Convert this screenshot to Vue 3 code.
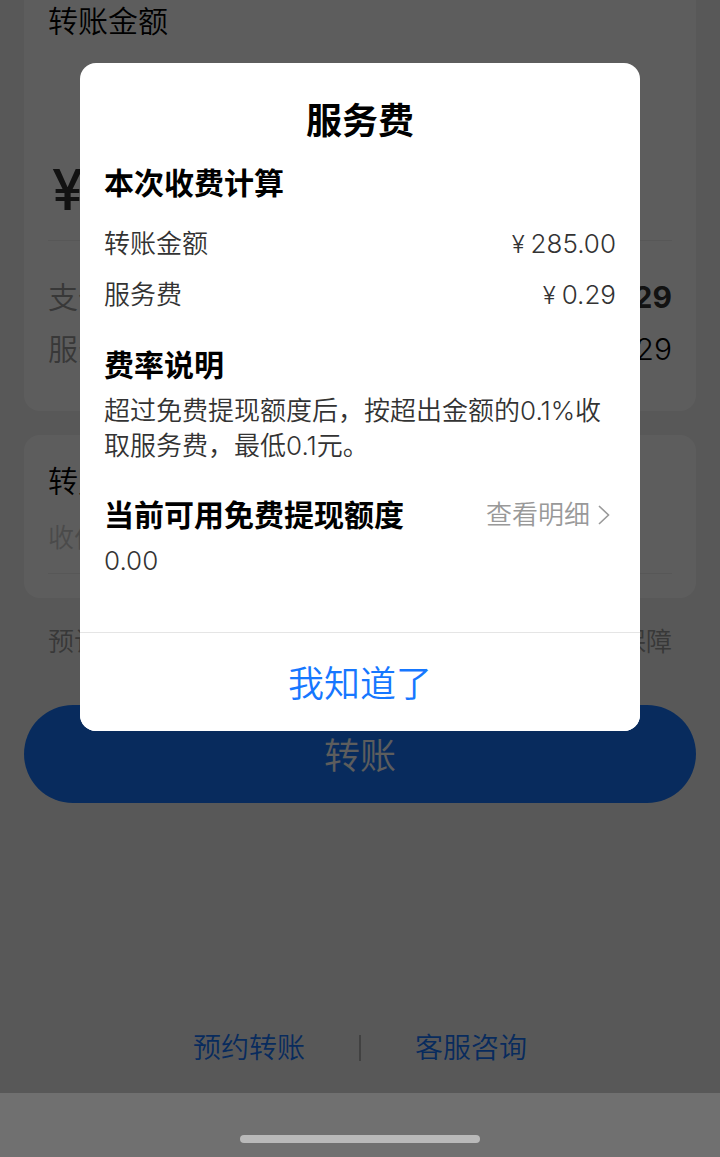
<template>
  <div class="screen">
    <div class="page">
      <main class="transfer">
        <section class="card amount-card">
          <h2 class="card-title">转账金额</h2>
          <div class="amount">¥285.00</div>
          <div class="row">
            <span class="row-label">支付总额</span>
            <strong>285.29</strong>
          </div>
          <div class="row">
            <span class="row-label">服务费</span>
            <span>0.29</span>
          </div>
        </section>

        <section class="card note-card">
          <label class="card-title" for="note">转账说明</label>
          <input id="note" v-model="note" class="note" type="text" placeholder="收付款双方可见" />
        </section>

        <div class="tips">
          <span>预计实时到账</span>
          <span>资金安全保障</span>
        </div>

        <button class="submit" type="button">转账</button>
      </main>

      <nav class="links">
        <a href="#">预约转账</a>
        <span class="separator"></span>
        <a href="#">客服咨询</a>
      </nav>

      <div v-if="visible" class="overlay">
        <div class="dialog" role="dialog" aria-modal="true" aria-labelledby="dialog-title">
          <div class="dialog-body">
            <h1 id="dialog-title" class="dialog-title">服务费</h1>

            <h3>本次收费计算</h3>
            <dl class="fees">
              <div v-for="fee in fees" :key="fee.label" class="fee">
                <dt>{{ fee.label }}</dt>
                <dd><span class="yen">¥</span>{{ fee.value }}</dd>
              </div>
            </dl>

            <h3>费率说明</h3>
            <p class="rule">超过免费提现额度后，按超出金额的0.1%收取服务费，最低0.1元。</p>

            <div class="quota-head">
              <h3>当前可用免费提现额度</h3>
              <a class="detail" href="#">
                查看明细
                <svg width="12" height="22" viewBox="0 0 12 22" aria-hidden="true">
                  <path d="M1 2L10.500 11L1 20" fill="none" stroke="currentColor" stroke-width="1.6" />
                </svg>
              </a>
            </div>
            <p class="quota">0.00</p>
          </div>
          <button class="confirm" type="button" @click="visible = false">我知道了</button>
        </div>
      </div>
    </div>

    <div class="system-bar">
      <div class="handle"></div>
    </div>
  </div>
</template>

<script setup>
import { ref } from 'vue'

const visible = ref(true)
const note = ref('')

const fees = [
  { label: '转账金额', value: '285.00' },
  { label: '服务费', value: '0.29' }
]
</script>

<style>
body {
  margin: 0;
}
</style>

<style scoped>
.screen {
  display: flex;
  flex-direction: column;
  min-height: 100vh;
  font-family: Inter, 'Noto Sans CJK SC', sans-serif;
  font-size: 26px;
  font-weight: 350;
  color: #333;
}

.screen * {
  box-sizing: border-box;
}

h1,
h2,
h3,
p,
dl,
dd {
  margin: 0;
}

button {
  border: none;
  font-family: inherit;
  font-weight: inherit;
  cursor: pointer;
}

a {
  text-decoration: none;
}

.page {
  position: relative;
  display: flex;
  flex: 1;
  flex-direction: column;
  justify-content: space-between;
  background: #f2f2f2;
}

.transfer {
  padding: 0 24px;
}

.card {
  padding: 0 24px;
  border-radius: 16px;
  background: #fff;
}

.amount-card {
  padding-bottom: 36px;
  border-radius: 0 0 16px 16px;
}

.card-title {
  display: block;
  font-size: 30px;
  font-weight: inherit;
  line-height: 42px;
  color: #000;
}

.amount {
  margin: 108px 0 30px;
  padding: 0 4px 10px;
  border-bottom: 1px solid #eee;
  font-size: 56px;
  font-weight: 500;
  line-height: 80px;
}

.row {
  display: flex;
  justify-content: space-between;
  font-size: 30px;
  line-height: 52px;
  color: #000;
}

.row strong {
  color: #333;
}

.row-label {
  color: #999;
}

.note-card {
  margin-top: 24px;
  padding-top: 25px;
  padding-bottom: 24px;
}

.note {
  width: 100%;
  height: 72px;
  padding: 0;
  border: none;
  border-bottom: 1px solid #eee;
  background: none;
  font-family: inherit;
  font-size: 26px;
  font-weight: inherit;
}

.note::placeholder {
  color: #ccc;
  opacity: 1;
}

.tips {
  display: flex;
  justify-content: space-between;
  padding: 26px 24px 21px;
  line-height: 36px;
  color: #999;
}

.submit {
  width: 100%;
  height: 98px;
  margin-top: 24px;
  padding: 0 0 3px;
  border-radius: 49px;
  background: #1677ff;
  font-size: 36px;
  color: #fff;
}

.links {
  display: flex;
  align-items: center;
  justify-content: center;
  gap: 54px;
  padding-bottom: 25px;
  font-size: 28px;
  line-height: 40px;
}

.links a {
  color: #1677ff;
}

.separator {
  width: 2px;
  height: 26px;
  background: #b2b2b2;
}

.overlay {
  position: absolute;
  inset: 0;
  padding: 63px 80px 0;
  background: rgba(0, 0, 0, 0.635);
}

.dialog {
  overflow: hidden;
  border-radius: 16px;
  background: #fff;
}

.dialog-body {
  padding: 33px 24px 53px;
}

.dialog-title {
  font-size: 36px;
  line-height: 50px;
  text-align: center;
  color: #000;
}

h3 {
  font-size: 30px;
  line-height: 42px;
  color: #000;
}

.dialog-title + h3 {
  margin-top: 16px;
}

.fees {
  margin: 15px 0 23px;
}

.fee {
  display: flex;
  justify-content: space-between;
  line-height: 50px;
}

.yen {
  margin-right: 6px;
  font-size: 24px;
}

.rule {
  margin: 7px 0 31px;
  line-height: 35px;
}

.quota-head {
  display: flex;
  align-items: center;
  justify-content: space-between;
}

.detail {
  display: flex;
  align-items: center;
  gap: 8px;
  padding-right: 6px;
  line-height: 36px;
  color: #999;
}

.quota {
  margin-top: 7px;
  line-height: 36px;
}

.confirm {
  display: block;
  width: 100%;
  height: 99px;
  padding: 0 0 3px;
  border-top: 1px solid #e5e5e5;
  background: #fff;
  font-size: 36px;
  color: #1677ff;
}

.system-bar {
  display: flex;
  justify-content: center;
  padding: 42px 0 14px;
  background: #707070;
}

.handle {
  width: 240px;
  height: 8px;
  border-radius: 4px;
  background: #b9b9b9;
}
</style>
